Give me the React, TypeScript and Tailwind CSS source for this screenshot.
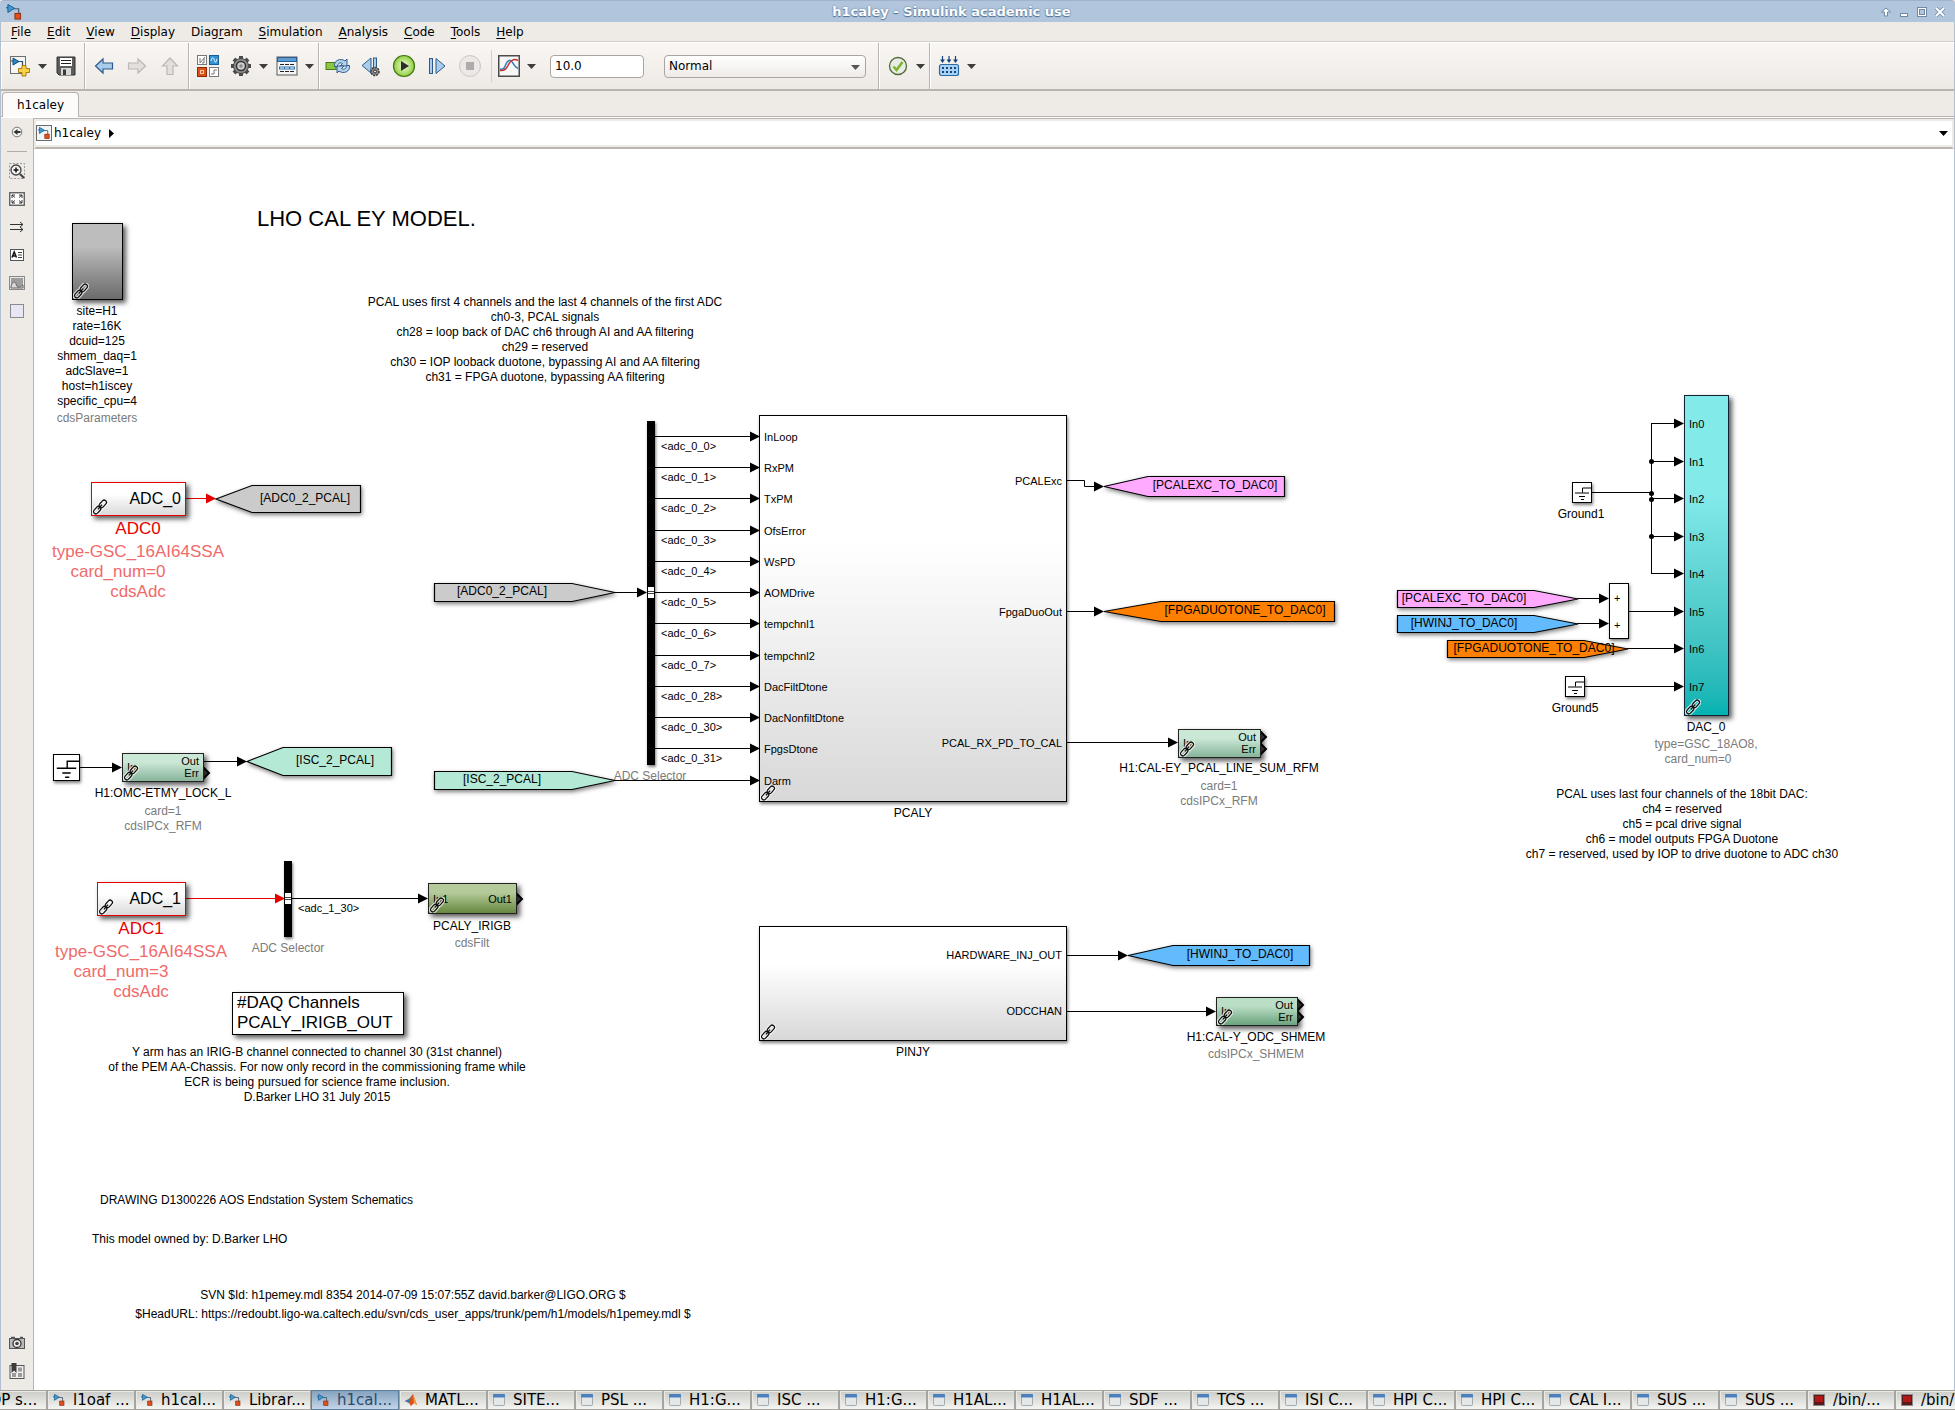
import type { ReactNode } from "react";

/**
 * Model editor window: title bar, menu, toolbar, palette, the block diagram
 * canvas and the desktop task bar underneath.
 */

// Scroll origin of the diagram: block coordinates below are model coordinates.
const ORIGIN_X = 34;
const ORIGIN_Y = 149;

const at = (x: number, y: number) => ({ left: x - ORIGIN_X, top: y - ORIGIN_Y });

/* ------------------------------------------------------------------ */
/* Icons                                                              */
/* ------------------------------------------------------------------ */

const ModelGlyph = () => (
  <>
    <path d="M7 5h6.500v6" fill="none" stroke="#44576b" strokeWidth="1.200" />
    <path d="M0 4h3" stroke="#1c5d92" strokeWidth="1.200" />
    <path d="M2 .5l7 4-7 4.500z" fill="#3f9bd8" stroke="#165a8e" strokeWidth="1" />
    <rect x="9.500" y="10" width="6" height="6" fill="#e0521d" stroke="#8c2a08" strokeWidth="1" />
  </>
);

const ModelIcon = ({ className = "w-4 h-4" }: { className?: string }) => (
  <svg className={className} viewBox="0 0 17 17" aria-hidden="true">
    <ModelGlyph />
  </svg>
);

const BoxedModelIcon = () => (
  <svg className="w-4 h-4" viewBox="0 0 16 16" aria-hidden="true">
    <rect x=".5" y=".5" width="15" height="15" fill="#f2f4f6" stroke="#6b6b6b" />
    <g transform="translate(2 2) scale(.72)">
      <ModelGlyph />
    </g>
  </svg>
);

const NewModelIcon = () => (
  <svg width="22" height="22" viewBox="0 0 22 22">
    <rect x="1.500" y="1.500" width="15" height="17" fill="#f4f5f6" stroke="#6d6d6d" />
    <path d="M2 6h2M9 6.500h4.500v4" fill="none" stroke="#2e4a63" strokeWidth="1.200" />
    <path d="M4 3l6 3.500-6 3.500z" fill="#2f86c4" stroke="#114c7d" />
    <path d="M13 10.500h4v3h3.500v4H17V21h-4v-3.500H9.500v-4H13z" fill="#f8d24b" stroke="#a97a12" />
  </svg>
);

const SaveIcon = () => (
  <svg width="20" height="20" viewBox="0 0 20 20">
    <path d="M1 1h18v18H3l-2-2z" fill="#5d5d5d" stroke="#303030" />
    <rect x="4" y="2" width="12" height="8" fill="#fff" />
    <path d="M5 4.500h10M5 7.500h10" stroke="#222" strokeWidth="1.200" />
    <rect x="5" y="12" width="10" height="7" fill="#d7d7d7" />
    <rect x="7" y="13.500" width="3" height="5.500" fill="#3a3a3a" />
  </svg>
);

const BlockArrow = ({ d, on }: { d: string; on?: boolean }) => (
  <svg width="20" height="18" viewBox="0 0 20 18">
    <path d={d} fill={on ? "#a9cdea" : "#e2dfdc"} stroke={on ? "#2d5a8c" : "#bbb8b4"} strokeWidth="1.200" />
  </svg>
);

const LibraryIcon = () => (
  <svg width="24" height="24" viewBox="0 0 24 24">
    <rect x="1.500" y="1.500" width="9" height="9" fill="#fff" stroke="#777" />
    <path d="M4 4v5l5-6M6 9h2V4" fill="none" stroke="#777" />
    <rect x="13.500" y="1.500" width="9" height="9" fill="#2f93d6" stroke="#135e96" />
    <path d="M15 7c1-5 3-3 3.500-.5S20 9 21 5" fill="none" stroke="#fff" />
    <rect x="1.500" y="13.500" width="9" height="9" fill="#dd5117" stroke="#8c2a08" />
    <rect x="4.500" y="16.500" width="3" height="3" fill="none" stroke="#ffc7a6" />
    <rect x="13.500" y="13.500" width="9" height="9" fill="#fff" stroke="#777" />
    <path d="M15 20h3v-4h3" fill="none" stroke="#777" />
  </svg>
);

const GearIcon = ({ size = 22 }: { size?: number }) => (
  <svg width={size} height={size} viewBox="0 0 22 22">
    <g stroke="#4a4a4a" strokeWidth="4">
      <path d="M11 1v20M1 11h20M4 4l14 14M18 4L4 18" />
    </g>
    <circle cx="11" cy="11" r="7.500" fill="#8d8d8d" stroke="#4a4a4a" />
    <circle cx="11" cy="11" r="4.500" fill="#cfcfcf" stroke="#333" strokeWidth="1.500" />
    <circle cx="11" cy="11" r="1.800" fill="#8a8a8a" />
  </svg>
);

const ExplorerIcon = () => (
  <svg width="22" height="20" viewBox="0 0 22 20">
    <rect x="1" y="1" width="20" height="18" fill="#f4f5f6" stroke="#5a5a5a" />
    <rect x="1.500" y="1.500" width="19" height="4" fill="#5d9bd0" stroke="#2a5f96" />
    <path d="M4 8.500h4M9 8.500h4M14 8.500h4M4 15.500h4M9 15.500h4M14 15.500h4" stroke="#222" strokeWidth="1.200" />
    <path d="M3 12h16" stroke="#2a6fae" strokeWidth="3" />
    <path d="M4 12h4M9 12h4M14 12h4" stroke="#fff" />
  </svg>
);

const FastRestartIcon = () => (
  <svg width="26" height="20" viewBox="0 0 26 20">
    <rect x="1" y="6.500" width="10" height="7" fill="#8dc63f" stroke="#4b7a1d" />
    <path d="M9.500 10.500c-1-6 6-9 10.500-5.500l2-2v7h-7l2.500-2.500c-2-1.500-5-.5-5 3z" fill="#b4d4ee" stroke="#2d5a8c" />
    <path d="M24.500 9.500c1 6-6 9-10.500 5.500l-2 2v-7h7l-2.500 2.500c2 1.500 5 .5 5-3z" fill="#b4d4ee" stroke="#2d5a8c" />
  </svg>
);

const StepBackIcon = () => (
  <svg width="20" height="22" viewBox="0 0 20 22">
    <path d="M10 3v15L1 10.500z" fill="#a9cdea" stroke="#2d5a8c" />
    <rect x="12.500" y="3" width="3" height="12" fill="#a9cdea" stroke="#2d5a8c" />
    <circle cx="14" cy="16.500" r="4" fill="#8d8d8d" stroke="#3a3a3a" strokeWidth="1.500" strokeDasharray="2 1" />
    <circle cx="14" cy="16.500" r="1.500" fill="#ddd" stroke="#333" />
  </svg>
);

const RunIcon = () => (
  <svg width="24" height="24" viewBox="0 0 24 24">
    <circle cx="12" cy="12" r="10.500" fill="url(#runFill)" stroke="#3f7413" strokeWidth="1.200" />
    <path d="M9 7l8 5-8 5z" fill="#2c2c2c" />
  </svg>
);

const StepForwardIcon = () => (
  <svg width="18" height="18" viewBox="0 0 18 18">
    <rect x="1.500" y="1.500" width="3" height="15" fill="#a9cdea" stroke="#2d5a8c" />
    <path d="M8 1.500v15L17 9z" fill="#a9cdea" stroke="#2d5a8c" />
  </svg>
);

const StopIcon = () => (
  <svg width="24" height="24" viewBox="0 0 24 24">
    <circle cx="12" cy="12" r="10.500" fill="#ebe8e5" stroke="#cbc8c4" />
    <rect x="8" y="8" width="8" height="8" fill="#aeabaa" />
  </svg>
);

const ScopeIcon = () => (
  <svg width="22" height="22" viewBox="0 0 22 22">
    <rect x=".75" y=".75" width="20.500" height="20.500" fill="#f7f7f7" stroke="#4b4b4b" strokeWidth="1.500" />
    <path d="M2 14c3.500 1 4.500-1 6-5s4.500-5 6.500-1.500 2.500 4.500 5.500 6" fill="none" stroke="#2f7fc1" strokeWidth="1.500" />
    <path d="M2 15.500c5 .5 6.500-2 8.500-6s5.500-6.500 9.500-4" fill="none" stroke="#c8302c" strokeWidth="1.500" />
  </svg>
);

const CheckIcon = () => (
  <svg width="20" height="20" viewBox="0 0 20 20">
    <circle cx="10" cy="10" r="8.500" fill="#e9ece4" stroke="#4f6a35" strokeWidth="1.300" />
    <path d="M5.500 10.500l3 3.500 6-8" fill="none" stroke="#7ab52c" strokeWidth="2.500" />
  </svg>
);

const BuildIcon = () => (
  <svg width="22" height="22" viewBox="0 0 22 22">
    <path d="M4.500 1v5M11 1v5M17.500 1v5" stroke="#15457a" strokeWidth="1.200" />
    <path d="M2 4.500h5L4.500 8zM8.500 4.500h5L11 8zM15 4.500h5L17.500 8z" fill="#15457a" />
    <rect x="1.500" y="9.500" width="19" height="11" rx="2" fill="#a8d2f3" stroke="#2a6cab" strokeWidth="1.200" />
    <path d="M4 13h14M4 17h14" stroke="#15457a" strokeWidth="2" strokeDasharray="2 2" />
  </svg>
);

const Caret = ({ className = "fill-[#3d3d3d]" }: { className?: string }) => (
  <svg width="9" height="5" viewBox="0 0 9 5" className={className} aria-hidden="true">
    <path d="M0 0h9L4.500 5z" />
  </svg>
);

const LinkBadge = () => (
  <svg className="absolute left-0 bottom-0 w-4 h-4" viewBox="0 0 16 16" aria-hidden="true">
    <g transform="rotate(-48 8 8)" fill="none">
      <g stroke="#fff" strokeOpacity=".75" strokeWidth="3.500">
        <rect x="-.5" y="5.700" width="8.500" height="4.600" rx="2.300" />
        <rect x="8" y="5.700" width="8.500" height="4.600" rx="2.300" />
      </g>
      <g stroke="#111" strokeWidth="1.300">
        <rect x="-.5" y="5.700" width="8.500" height="4.600" rx="2.300" />
        <rect x="8" y="5.700" width="8.500" height="4.600" rx="2.300" />
        <path d="M5 8h6" />
      </g>
    </g>
  </svg>
);

/* ------------------------------------------------------------------ */
/* Window chrome                                                      */
/* ------------------------------------------------------------------ */

const TitleBar = () => (
  <header className="flex items-center h-[22px] shrink-0 pl-1.5 pr-2.5 rounded-t bg-[#b1c6dd] border-t border-[#9fb4ca]">
    <ModelIcon />
    <h1 className="flex-1 text-center text-[13px] leading-5 font-bold text-white [text-shadow:0_0_2px_#4f6f92,0_1px_1px_#4f6f92]">
      h1caley - Simulink academic use
    </h1>
    <div className="flex items-center gap-2">
      <button aria-label="Shade">
        <svg width="10" height="10" viewBox="0 0 10 10">
          <path d="M5 1L.5 5h3v4h3V5h3z" fill="#fff" stroke="#6f88a3" />
        </svg>
      </button>
      <button aria-label="Minimize">
        <svg width="10" height="10" viewBox="0 0 10 10">
          <rect x="1.500" y="6.500" width="7" height="3" fill="#fff" stroke="#6f88a3" />
        </svg>
      </button>
      <button aria-label="Maximize">
        <svg width="10" height="10" viewBox="0 0 10 10">
          <rect x="1.500" y="1.500" width="7" height="7" fill="none" stroke="#6f88a3" strokeWidth="3" />
          <rect x="1.500" y="1.500" width="7" height="7" fill="none" stroke="#fff" />
        </svg>
      </button>
      <button aria-label="Close">
        <svg width="10" height="10" viewBox="0 0 10 10">
          <path d="M1 1l8 8M9 1L1 9" stroke="#6f88a3" strokeWidth="3.500" />
          <path d="M1 1l8 8M9 1L1 9" stroke="#fff" strokeWidth="2" />
        </svg>
      </button>
    </div>
  </header>
);

// [before mnemonic, mnemonic, after]
const MENUS: [string, string, string][] = [
  ["", "F", "ile"],
  ["", "E", "dit"],
  ["", "V", "iew"],
  ["", "D", "isplay"],
  ["Diag", "r", "am"],
  ["", "S", "imulation"],
  ["", "A", "nalysis"],
  ["", "C", "ode"],
  ["", "T", "ools"],
  ["", "H", "elp"],
];

const MenuBar = () => (
  <nav className="flex items-center gap-4 h-5 shrink-0 px-2.5 bg-[#eeebe6] border-b border-[#d2cfcb]">
    {MENUS.map(([pre, key, post]) => (
      <button key={pre + key + post} className="text-[12px] leading-4">
        {pre}
        <span className="underline underline-offset-2">{key}</span>
        {post}
      </button>
    ))}
  </nav>
);

const ToolGroup = ({ children }: { children: ReactNode }) => (
  <div className="flex items-center px-0.5 border-r border-[#b8b4b0] shadow-[inset_1px_0_0_#fff]">{children}</div>
);

const Tool = ({ label, children }: { label: string; children: ReactNode }) => (
  <button aria-label={label} className="flex items-center justify-center w-[33px] h-8">
    {children}
  </button>
);

const More = ({ label }: { label: string }) => (
  <button aria-label={label} className="flex items-center justify-center w-[13px] h-8">
    <Caret />
  </button>
);

const Toolbar = () => (
  <div className="flex h-[49px] shrink-0 border-t border-t-white border-b-2 border-b-[#b8b3af] bg-linear-to-b from-[#f9f6f3] to-[#edeae6]">
    <ToolGroup>
      <Tool label="New model">
        <NewModelIcon />
      </Tool>
      <More label="New options" />
      <Tool label="Save">
        <SaveIcon />
      </Tool>
    </ToolGroup>
    <ToolGroup>
      <Tool label="Back">
        <BlockArrow on d="M9 2v4h9.500v6H9v4L1.500 9z" />
      </Tool>
      <Tool label="Forward">
        <BlockArrow d="M11 2v4H1.500v6H11v4l7.500-7z" />
      </Tool>
      <Tool label="Up to parent">
        <BlockArrow d="M10 1l7.500 8H13v8.500H7V9H2.500z" />
      </Tool>
    </ToolGroup>
    <ToolGroup>
      <Tool label="Library browser">
        <LibraryIcon />
      </Tool>
      <Tool label="Model configuration">
        <GearIcon />
      </Tool>
      <More label="Configuration options" />
      <Tool label="Model explorer">
        <ExplorerIcon />
      </Tool>
      <More label="Explorer options" />
    </ToolGroup>
    <ToolGroup>
      <Tool label="Fast restart">
        <FastRestartIcon />
      </Tool>
      <Tool label="Step back">
        <StepBackIcon />
      </Tool>
      <Tool label="Run">
        <RunIcon />
      </Tool>
      <Tool label="Step forward">
        <StepForwardIcon />
      </Tool>
      <Tool label="Stop">
        <StopIcon />
      </Tool>
      <div className="w-1.5 h-8 border-r border-[#d3d0cc]" />
      <Tool label="Data inspector">
        <ScopeIcon />
      </Tool>
      <More label="Inspector options" />
      <input
        aria-label="Simulation stop time"
        defaultValue="10.0"
        className="w-[94px] h-[23px] ml-3 px-1 text-[12px] rounded-sm border border-[#a9a5a0] bg-white"
      />
      <div className="relative ml-5 mr-2.5">
        <select
          aria-label="Simulation mode"
          className="block appearance-none w-[202px] h-[23px] px-1 text-[12px] leading-5 rounded-sm border border-[#a9a5a0] bg-linear-to-b from-white to-[#eeebe8]"
        >
          <option>Normal</option>
          <option>Accelerator</option>
        </select>
        <div className="absolute right-1.5 top-2.5 pointer-events-none">
          <Caret className="fill-[#555]" />
        </div>
      </div>
    </ToolGroup>
    <ToolGroup>
      <Tool label="Model advisor">
        <CheckIcon />
      </Tool>
      <More label="Advisor options" />
    </ToolGroup>
    <div className="flex items-center px-0.5 shadow-[inset_1px_0_0_#fff]">
      <Tool label="Build">
        <BuildIcon />
      </Tool>
      <More label="Build options" />
    </div>
  </div>
);

const TabStrip = () => (
  <div className="flex items-end h-[26px] shrink-0 px-px border-b border-[#b5b1ad] bg-[#eeebe6]">
    <button className="h-[25px] -mb-px w-[77px] text-[12px] leading-6 rounded-t-sm border border-b-0 border-[#b5b1ad] bg-[#fcfbfa]">
      h1caley
    </button>
  </div>
);

const PaletteButton = ({ label, children }: { label: string; children: ReactNode }) => (
  <button aria-label={label} className="flex items-center justify-center w-8 h-7">
    <svg width="16" height="16" viewBox="0 0 16 16" fill="none">
      {children}
    </svg>
  </button>
);

const Palette = () => (
  <aside className="flex flex-col w-8 shrink-0 pb-[5px] bg-[#eeebe6]">
    <PaletteButton label="Hide browser">
      <circle cx="8" cy="8" r="4.800" fill="#f4f4f4" stroke="#777" />
      <path d="M4.500 8l4-3v2h3v2h-3v2z" fill="#333" />
    </PaletteButton>
    <hr className="w-5 my-[5px] mx-auto border-t-0 h-px bg-[#b0aca8] border-b-0" />
    <PaletteButton label="Zoom">
      <path d="M.5.5h15v15H.5z" stroke="#999" strokeDasharray="2 1.500" />
      <circle cx="7" cy="7" r="5" fill="#f4f4f4" stroke="#444" strokeWidth="1.300" />
      <path d="M11 11l4 4" stroke="#444" strokeWidth="2.200" />
      <path d="M4.500 7h5M7 4.500v5" stroke="#111" strokeWidth="1.500" />
    </PaletteButton>
    <PaletteButton label="Fit to view">
      <rect x=".75" y="1.750" width="14.500" height="12.500" fill="#fff" stroke="#555" strokeWidth="1.300" />
      <path d="M3 7V4h3M10 4h3v3M13 9v3h-3M6 12H3V9M3 4l3 2.500M13 4l-3 2.500M13 12l-3-2.500M3 12l3-2.500" stroke="#333" />
    </PaletteButton>
    <PaletteButton label="Sample time">
      <path d="M1 5.500h13M1 10.500h13M11 3l3 2.500L11 8M11 8l3 2.500-3 2.500" stroke="#333" />
    </PaletteButton>
    <PaletteButton label="Annotation">
      <rect x="1.500" y="2.500" width="13" height="11" fill="#fff" stroke="#555" />
      <path d="M3 10.500L5.200 5l2.300 5.500M4 9h2.700" stroke="#111" strokeWidth="1.500" />
      <path d="M9 5.500h4M9 8h4M9 10.500h4" stroke="#444" />
    </PaletteButton>
    <PaletteButton label="Image">
      <rect x=".5" y="1.500" width="15" height="13" fill="#e8e8e8" stroke="#888" />
      <rect x="2" y="3" width="12" height="10" fill="#9d9d9d" />
      <path d="M2 11c2-5 4-5 5.500-1s3 2 6.500 0v3H2z" fill="#d8d8d8" stroke="#666" />
    </PaletteButton>
    <PaletteButton label="Area">
      <rect x="1.500" y="1.500" width="13" height="13" fill="#e6e6f5" stroke="#8b8b8b" />
    </PaletteButton>
    <div className="flex-1" />
    <PaletteButton label="Screenshot">
      <rect x=".5" y="3.500" width="15" height="10" fill="#b9b9b9" stroke="#555" />
      <path d="M2 2.500h4M11 2.500h3" stroke="#555" strokeWidth="1.500" />
      <circle cx="8" cy="8.500" r="4" fill="#eee" stroke="#333" strokeWidth="1.300" />
      <circle cx="8" cy="8.500" r="1.800" fill="#444" />
    </PaletteButton>
    <PaletteButton label="Bookmarks">
      <rect x="1" y="2.500" width="14" height="13" fill="#eee" stroke="#555" />
      <path d="M9 4.500h4v4H9zM9 10h4v4H9zM3 10h4v4H3z" fill="#9a9a9a" />
      <path d="M2.500 0h5v10L5 7.500 2.500 10z" fill="#3c3c3c" />
    </PaletteButton>
  </aside>
);

const Breadcrumb = () => (
  <div className="flex items-center h-[30px] shrink-0 pb-0.5 border-2 border-[#eeebe6] border-b-[#bbb6b2] bg-white shadow-[inset_0_-2px_0_#eeebe6]">
    <BoxedModelIcon />
    <a href="#h1caley" className="ml-0.5 text-[12px] leading-5">
      h1caley
    </a>
    <svg className="ml-2" width="5" height="9" viewBox="0 0 5 9" aria-hidden="true">
      <path d="M0 0l5 4.500L0 9z" />
    </svg>
    <button aria-label="Show history" className="ml-auto mr-1">
      <Caret className="fill-black" />
    </button>
  </div>
);

/* ------------------------------------------------------------------ */
/* Diagram                                                            */
/* ------------------------------------------------------------------ */

type Wire = { d: string; tip?: [number, number]; red?: boolean };

const BUS_ROWS: { y: number; signal?: string; port: string }[] = [
  { y: 436, signal: "<adc_0_0>", port: "InLoop" },
  { y: 467, signal: "<adc_0_1>", port: "RxPM" },
  { y: 498, signal: "<adc_0_2>", port: "TxPM" },
  { y: 530, signal: "<adc_0_3>", port: "OfsError" },
  { y: 561, signal: "<adc_0_4>", port: "WsPD" },
  { y: 592, signal: "<adc_0_5>", port: "AOMDrive" },
  { y: 623, signal: "<adc_0_6>", port: "tempchnl1" },
  { y: 655, signal: "<adc_0_7>", port: "tempchnl2" },
  { y: 686, signal: "<adc_0_28>", port: "DacFiltDtone" },
  { y: 717, signal: "<adc_0_30>", port: "DacNonfiltDtone" },
  { y: 748, signal: "<adc_0_31>", port: "FpgsDtone" },
  { y: 780, port: "Darm" },
];

const DAC_PORTS = [423, 461, 498, 536, 573, 611, 648, 686];

const WIRES: Wire[] = [
  { d: "M186 498.500H206", tip: [216, 498], red: true },
  { d: "M79 767.500H112", tip: [122, 767] },
  { d: "M204 761.500H238", tip: [247, 761] },
  { d: "M186 898.500H275", tip: [285, 898], red: true },
  { d: "M292 898.500H418", tip: [428, 898] },
  { d: "M614 592.500H638", tip: [647, 592] },
  ...BUS_ROWS.map(({ y, signal }): Wire => ({ d: `M${signal ? 654 : 614} ${y}.5H750`, tip: [760, y] })),
  { d: "M1067 480.500H1084.500V486.500H1094", tip: [1104, 486] },
  { d: "M1067 611.500H1094", tip: [1104, 611] },
  { d: "M1067 742.500H1168", tip: [1178, 742] },
  { d: "M1067 955.500H1118", tip: [1128, 955] },
  { d: "M1067 1011.500H1206", tip: [1216, 1011] },
  { d: "M1592 492.500H1651.500" },
  { d: "M1651.500 423V574" },
  ...DAC_PORTS.slice(0, 5).map((y): Wire => ({ d: `M1651 ${y}.5H1675`, tip: [1684, y] })),
  { d: "M1577 598.500H1600", tip: [1609, 598] },
  { d: "M1577 623.500H1600", tip: [1609, 623] },
  { d: "M1629 611.500H1675", tip: [1684, 611] },
  { d: "M1627 648.500H1675", tip: [1684, 648] },
  { d: "M1585 686.500H1675", tip: [1684, 686] },
];

const JUNCTIONS = [461, 493, 499, 536];

const Wires = () => (
  <svg className="absolute inset-0 w-full h-full" aria-hidden="true">
    <g transform={`translate(${-ORIGIN_X} ${-ORIGIN_Y})`}>
      {WIRES.map(({ d, tip, red }) => (
        <g key={d} className={red ? "stroke-[#e80000] fill-[#e80000]" : "stroke-black fill-black"}>
          <path d={d} fill="none" />
          {tip && <path d={`M${tip[0]} ${tip[1] + 0.5}l-10-5v10z`} stroke="none" />}
        </g>
      ))}
      {JUNCTIONS.map((y) => (
        <circle key={y} cx="1651.500" cy={y + 0.5} r="2.500" />
      ))}
    </g>
  </svg>
);

type BlockProps = {
  x: number;
  y: number;
  w: number;
  h: number;
  className: string;
  linked?: boolean;
  children?: ReactNode;
};

const Block = ({ x, y, w, h, className, linked, children }: BlockProps) => (
  <div className={`absolute border ${className}`} style={{ ...at(x, y), width: w, height: h }}>
    {children}
    {linked && <LinkBadge />}
  </div>
);

const DEEP = "shadow-[3px_3px_5px_rgba(0,0,0,0.65)]";
const SOFT = "shadow-[1px_2px_3px_rgba(0,0,0,0.5)]";

type PortProps = { x: number; y: number; children: ReactNode; side?: "left" | "right" };

/* Port caption, vertically centred on y and anchored to one side. */
const Port = ({ x, y, children, side = "left" }: PortProps) => (
  <div
    className={`absolute flex w-0 text-[11px] leading-[14px] whitespace-nowrap ${side === "right" ? "justify-end" : ""}`}
    style={at(x, y - 7)}
  >
    <span>{children}</span>
  </div>
);

/* Open output port. */
const Chevron = ({ x, y }: { x: number; y: number }) => (
  <svg className="absolute" width="9" height="14" viewBox="0 0 9 14" style={at(x, y - 7)} aria-hidden="true">
    <path d="M0 1l6 6-6 6" fill="#555" stroke="#000" strokeWidth="2" />
  </svg>
);

const IpcBlock = ({ x, y, w, className, oneOpen }: { x: number; y: number; w: number; className: string; oneOpen?: boolean }) => (
  <>
    {!oneOpen && <Chevron x={x + w - 1} y={y + 8} />}
    <Chevron x={x + w - 1} y={y + 20} />
    <Block x={x} y={y} w={w} h={29} linked className={`border-[#222] ${DEEP} ${className}`}>
      <span className="absolute left-1 top-1.5 text-[11px] leading-[14px]">In</span>
      <div className="flex flex-col items-end px-1 pt-px text-[11px] leading-3">
        <span>Out</span>
        <span>Err</span>
      </div>
    </Block>
  </>
);

type TagProps = {
  x: number;
  y: number;
  w: number;
  h: number;
  point: number;
  goto?: boolean;
  fill: string;
  textX: number;
  label: string;
};

/* Goto tags point left, From tags point right. */
const Tag = ({ x, y, w, h, point, goto: isGoto, fill, textX, label }: TagProps) => {
  const mid = h / 2;
  const points = isGoto
    ? `0,${mid} ${point},.5 ${w - 0.5},.5 ${w - 0.5},${h - 0.5} ${point},${h - 0.5}`
    : `.5,.5 ${w - point},.5 ${w},${mid} ${w - point},${h - 0.5} .5,${h - 0.5}`;
  return (
    <div className="absolute" style={{ ...at(x, y), width: w, height: h }}>
      <svg
        className="absolute inset-0 overflow-visible drop-shadow-[1px_2px_2px_rgba(0,0,0,0.5)]"
        width={w}
        height={h}
        aria-hidden="true"
      >
        <polygon points={points} className={`stroke-black ${fill}`} strokeWidth="1.200" />
      </svg>
      <div className="absolute inset-y-0 flex items-center justify-center w-0 pb-0.5" style={{ left: textX - x }}>
        <span className="text-[12px] leading-[15px] whitespace-nowrap">{label}</span>
      </div>
    </div>
  );
};

const TAGS: TagProps[] = [
  { x: 216, y: 485, w: 145, h: 28, point: 36, goto: true, fill: "fill-[#cbcbcb]", textX: 305, label: "[ADC0_2_PCAL]" },
  { x: 247, y: 747, w: 145, h: 29, point: 36, goto: true, fill: "fill-[#b4e9d5]", textX: 335, label: "[ISC_2_PCAL]" },
  { x: 434, y: 583, w: 181, h: 19, point: 43, fill: "fill-[#cbcbcb]", textX: 502, label: "[ADC0_2_PCAL]" },
  { x: 434, y: 771, w: 181, h: 19, point: 43, fill: "fill-[#b4e9d5]", textX: 502, label: "[ISC_2_PCAL]" },
  { x: 1104, y: 476, w: 181, h: 21, point: 44, goto: true, fill: "fill-[#ffaaff]", textX: 1215, label: "[PCALEXC_TO_DAC0]" },
  { x: 1104, y: 601, w: 231, h: 21, point: 57, goto: true, fill: "fill-[#ff8000]", textX: 1245, label: "[FPGADUOTONE_TO_DAC0]" },
  { x: 1128, y: 945, w: 182, h: 21, point: 45, goto: true, fill: "fill-[#62bbfc]", textX: 1240, label: "[HWINJ_TO_DAC0]" },
  { x: 1397, y: 590, w: 181, h: 18, point: 44, fill: "fill-[#ffaaff]", textX: 1464, label: "[PCALEXC_TO_DAC0]" },
  { x: 1397, y: 615, w: 181, h: 18, point: 44, fill: "fill-[#62bbfc]", textX: 1464, label: "[HWINJ_TO_DAC0]" },
  { x: 1447, y: 640, w: 181, h: 18, point: 44, fill: "fill-[#ff8000]", textX: 1534, label: "[FPGADUOTONE_TO_DAC0]" },
];

const Ground = ({ x, y, w = 20, h = 21 }: { x: number; y: number; w?: number; h?: number }) => (
  <Block x={x} y={y} w={w} h={h} className={`border-black bg-white ${SOFT}`}>
    <svg className="w-full h-full" viewBox="0 0 18 18" aria-hidden="true">
      <path d="M18 4.500H9.500V9M2 9.500h14M6 13h6M8 16h3" fill="none" stroke="#000" />
    </svg>
  </Block>
);

/* Bus selector bar with the small input notch. */
const Selector = ({ x, y, h, notch }: { x: number; y: number; h: number; notch: number }) => (
  <div className="absolute w-2 bg-black shadow-[1px_2px_3px_rgba(0,0,0,0.5)]" style={{ ...at(x, y), height: h }}>
    <div className="absolute inset-x-px h-[11px] pt-1 bg-white" style={{ top: notch - y }}>
      <div className="h-[3px] border-y border-[#444]" />
    </div>
  </div>
);

type NoteProps = { x: number; y: number; lines: string[]; tone?: string; align?: "left" };

/* Free text; y is the middle of the first line. */
const Note = ({ x, y, lines, tone = "", align }: NoteProps) => (
  <div className="absolute flex justify-center w-0" style={at(x, y - 7)}>
    <div
      className={`text-[12px] leading-[15px] whitespace-nowrap ${align === "left" ? "w-0" : "text-center"} ${tone}`}
    >
      {lines.map((line) => (
        <p key={line}>{line}</p>
      ))}
    </div>
  </div>
);

const GRAY = "text-[#7b7b7b]";

const NOTES: NoteProps[] = [
  {
    x: 97,
    y: 311,
    lines: ["site=H1", "rate=16K", "dcuid=125", "shmem_daq=1", "adcSlave=1", "host=h1iscey", "specific_cpu=4"],
  },
  { x: 97, y: 418, lines: ["cdsParameters"], tone: GRAY },
  {
    x: 545,
    y: 302,
    lines: [
      "PCAL uses first 4 channels and the last 4 channels of the first ADC",
      "ch0-3, PCAL signals",
      "ch28 = loop back of DAC ch6 through AI and AA filtering",
      "ch29 = reserved",
      "ch30 = IOP looback duotone, bypassing AI and AA filtering",
      "ch31 = FPGA duotone, bypassing AA filtering",
    ],
  },
  { x: 163, y: 793, lines: ["H1:OMC-ETMY_LOCK_L"] },
  { x: 163, y: 811, lines: ["card=1", "cdsIPCx_RFM"], tone: GRAY },
  { x: 288, y: 948, lines: ["ADC Selector"], tone: GRAY },
  { x: 472, y: 926, lines: ["PCALY_IRIGB"] },
  { x: 472, y: 943, lines: ["cdsFilt"], tone: GRAY },
  {
    x: 317,
    y: 1052,
    lines: [
      "Y arm has an IRIG-B channel connected to channel 30 (31st channel)",
      "of the PEM AA-Chassis. For now only record in the commissioning frame while",
      "ECR is being pursued for science frame inclusion.",
      "D.Barker LHO 31 July 2015",
    ],
  },
  { x: 100, y: 1200, lines: ["DRAWING D1300226 AOS Endstation System Schematics"], align: "left" },
  { x: 92, y: 1239, lines: ["This model owned by: D.Barker LHO"], align: "left" },
  { x: 413, y: 1295, lines: ["SVN $Id: h1pemey.mdl 8354 2014-07-09 15:07:55Z david.barker@LIGO.ORG $"] },
  { x: 413, y: 1314, lines: ["$HeadURL: https://redoubt.ligo-wa.caltech.edu/svn/cds_user_apps/trunk/pem/h1/models/h1pemey.mdl $"] },
  { x: 650, y: 776, lines: ["ADC Selector"], tone: GRAY },
  { x: 913, y: 813, lines: ["PCALY"] },
  { x: 913, y: 1052, lines: ["PINJY"] },
  { x: 1219, y: 768, lines: ["H1:CAL-EY_PCAL_LINE_SUM_RFM"] },
  { x: 1219, y: 786, lines: ["card=1", "cdsIPCx_RFM"], tone: GRAY },
  { x: 1256, y: 1037, lines: ["H1:CAL-Y_ODC_SHMEM"] },
  { x: 1256, y: 1054, lines: ["cdsIPCx_SHMEM"], tone: GRAY },
  { x: 1581, y: 514, lines: ["Ground1"] },
  { x: 1575, y: 708, lines: ["Ground5"] },
  { x: 1706, y: 727, lines: ["DAC_0"] },
  { x: 1706, y: 744, lines: ["type=GSC_18AO8,"], tone: GRAY },
  { x: 1698, y: 759, lines: ["card_num=0"], tone: GRAY },
  {
    x: 1682,
    y: 794,
    lines: [
      "PCAL uses last four channels of the 18bit DAC:",
      "ch4 = reserved",
      "ch5 = pcal drive signal",
      "ch6 = model outputs FPGA Duotone",
      "ch7 = reserved, used by IOP to drive duotone to ADC ch30",
    ],
  },
];

const AdcBlock = ({ x, y, w, n, card, mid }: { x: number; y: number; w: number; n: number; card: number; mid: number }) => (
  <>
    <Block
      x={x}
      y={y}
      w={w}
      h={34}
      linked
      className={`flex items-center justify-end pr-1 border-[#e80000] bg-linear-to-b from-white from-35% to-[#d9d9d9] ${DEEP}`}
    >
      <span className="text-[16px] leading-5">ADC_{n}</span>
    </Block>
    <div className="absolute flex justify-center w-0 whitespace-nowrap" style={at(mid, y + 37)}>
      <div className="text-[17px] leading-5 text-center text-[#f06a6a]">
        <p className="mb-[3px] text-[#e80000]">ADC{n}</p>
        <p>type-GSC_16AI64SSA</p>
        <p className="pr-10">card_num={card}</p>
        <p>cdsAdc</p>
      </div>
    </div>
  </>
);

const Diagram = () => (
  <main className="relative flex-1 overflow-hidden bg-white [font-family:'Liberation_Sans',Arial,sans-serif] text-black">
    <Wires />

    <h2 className="absolute text-[22px] leading-7 whitespace-nowrap" style={at(257, 205)}>
      LHO CAL EY MODEL.
    </h2>

    <Block x={72} y={223} w={51} h={77} linked className={`border-black bg-linear-to-b from-[#bdbdbd] from-30% to-[#6c6c6c] ${DEEP}`} />

    <AdcBlock x={91} y={482} w={95} n={0} card={0} mid={138} />
    <AdcBlock x={97} y={882} w={89} n={1} card={3} mid={141} />

    <Ground x={53} y={754} w={27} h={27} />
    <IpcBlock x={122} y={753} w={82} oneOpen className="bg-linear-to-b from-[#cbe8d6] from-30% to-[#88b59b]" />

    <Selector x={284} y={861} h={76} notch={893} />
    <Port x={298} y={908}>
      {"<adc_1_30>"}
    </Port>
    <Chevron x={516} y={899} />
    <Block
      x={428}
      y={883}
      w={89}
      h={31}
      linked
      className={`flex items-center justify-between px-1 text-[11px] leading-[14px] border-[#222] bg-linear-to-b from-[#b4cb99] from-30% to-[#67883f] ${DEEP}`}
    >
      <span>In1</span>
      <span>Out1</span>
    </Block>

    <Block x={232} y={992} w={172} h={43} className={`px-1 text-[17px] leading-5 border-black bg-white ${DEEP}`}>
      <p>#DAQ Channels</p>
      <p>PCALY_IRIGB_OUT</p>
    </Block>

    <Selector x={647} y={421} h={344} notch={587} />
    <Block x={759} y={415} w={308} h={387} linked className={`border-black bg-linear-to-b from-white from-33% to-[#d8d8d8] ${SOFT}`} />
    {BUS_ROWS.map(({ y, signal, port }) => (
      <div key={port}>
        {signal && (
          <Port x={661} y={y + 10}>
            {signal}
          </Port>
        )}
        <Port x={764} y={y + 1}>
          {port}
        </Port>
      </div>
    ))}
    <Port x={1062} y={481} side="right">
      PCALExc
    </Port>
    <Port x={1062} y={612} side="right">
      FpgaDuoOut
    </Port>
    <Port x={1062} y={743} side="right">
      PCAL_RX_PD_TO_CAL
    </Port>
    <IpcBlock x={1178} y={729} w={83} className="bg-linear-to-b from-[#cbe8d6] from-30% to-[#88b59b]" />

    <Block x={759} y={926} w={308} h={115} linked className={`border-black bg-linear-to-b from-white from-33% to-[#d8d8d8] ${SOFT}`} />
    <Port x={1062} y={955} side="right">
      HARDWARE_INJ_OUT
    </Port>
    <Port x={1062} y={1011} side="right">
      ODCCHAN
    </Port>
    <IpcBlock x={1216} y={997} w={82} className="bg-linear-to-b from-[#bbdec6] from-30% to-[#6ba37e]" />

    <Ground x={1572} y={482} />
    <Ground x={1565} y={676} />
    <Block
      x={1609}
      y={583}
      w={20}
      h={56}
      className={`flex flex-col justify-around px-1 text-[11px] leading-4 border-black bg-white ${SOFT}`}
    >
      <span>+</span>
      <span>+</span>
    </Block>
    <Block x={1684} y={395} w={45} h={321} linked className={`border-[#123] bg-linear-to-b from-[#83eaea] from-30% to-[#00b2b2] ${DEEP}`} />
    {DAC_PORTS.map((y, i) => (
      <Port key={y} x={1689} y={y + 1}>
        In{i}
      </Port>
    ))}

    {TAGS.map((tag) => (
      <Tag key={`${tag.x}-${tag.y}`} {...tag} />
    ))}
    {NOTES.map((note) => (
      <Note key={`${note.x}-${note.y}`} {...note} />
    ))}
  </main>
);

/* ------------------------------------------------------------------ */
/* Task bar                                                           */
/* ------------------------------------------------------------------ */

type TaskKind = "model" | "matlab" | "window" | "term";

const TASKS: { label: string; kind: TaskKind; active?: boolean }[] = [
  { label: "IOP s...", kind: "model" },
  { label: "l1oaf ...", kind: "model" },
  { label: "h1cal...", kind: "model" },
  { label: "Librar...", kind: "model" },
  { label: "h1cal...", kind: "model", active: true },
  { label: "MATL...", kind: "matlab" },
  { label: "SITE...", kind: "window" },
  { label: "PSL ...", kind: "window" },
  { label: "H1:G...", kind: "window" },
  { label: "ISC ...", kind: "window" },
  { label: "H1:G...", kind: "window" },
  { label: "H1AL...", kind: "window" },
  { label: "H1AL...", kind: "window" },
  { label: "SDF ...", kind: "window" },
  { label: "TCS ...", kind: "window" },
  { label: "ISI C...", kind: "window" },
  { label: "HPI C...", kind: "window" },
  { label: "HPI C...", kind: "window" },
  { label: "CAL I...", kind: "window" },
  { label: "SUS ...", kind: "window" },
  { label: "SUS ...", kind: "window" },
  { label: "/bin/...", kind: "term" },
  { label: "/bin/...", kind: "term" },
];

const TaskIcon = ({ kind }: { kind: TaskKind }) => {
  if (kind === "model") return <ModelIcon className="w-3 h-3 shrink-0" />;
  return (
    <svg className="w-3 h-3 shrink-0" viewBox="0 0 12 12" aria-hidden="true">
      {kind === "matlab" && (
        <>
          <path d="M0 7l4-2 4-5 4 11-3-2-3 3-2-3z" fill="#d9531e" />
          <path d="M0 7l4-2 2-2-2 6z" fill="#3a78b5" />
          <path d="M8 0l4 11-3-2z" fill="#f2a13c" />
        </>
      )}
      {kind === "window" && (
        <>
          <rect x=".5" y=".5" width="11" height="11" rx="1" fill="#e4e7e7" stroke="#a3abb3" />
          <rect x="0" y="0" width="12" height="3.500" rx="1" fill="#4a7fc0" />
        </>
      )}
      {kind === "term" && (
        <>
          <rect x=".5" y=".5" width="11" height="11" fill="#5a1a1a" stroke="#8a8a8a" />
          <rect x="2" y="2" width="8" height="6" fill="#b01818" />
        </>
      )}
    </svg>
  );
};

const TaskBar = () => (
  <footer className="flex h-5 shrink-0 overflow-hidden bg-[#a5a49e]">
    <div className="flex -ml-[41px]">
      {TASKS.map(({ label, kind, active }, i) => (
        <button
          key={i}
          className={`flex items-center gap-2 w-[88px] h-5 pl-[5px] shrink-0 text-[15px] leading-4 whitespace-nowrap overflow-hidden border ${
            active
              ? "text-[#2c4a6b] border-[#5f7f9f] bg-linear-to-b from-[#86a2be] to-[#c3d5e8]"
              : "text-black border-[#a5a49e] bg-linear-to-b from-[#cbcbc7] to-[#f4f4f2] shadow-[inset_1px_1px_0_#e9e9e6]"
          }`}
        >
          <TaskIcon kind={kind} />
          {label}
        </button>
      ))}
    </div>
  </footer>
);

export default function App() {
  return (
    <div className="flex flex-col h-screen overflow-hidden bg-[#eeebe6] [font-family:'DejaVu_Sans',sans-serif] text-black">
      {/* gradient used by the run button */}
      <svg className="absolute w-0 h-0" aria-hidden="true">
        <defs>
          <radialGradient id="runFill">
            <stop offset="0" stopColor="#f2fbe0" />
            <stop offset="1" stopColor="#8fd03a" />
          </radialGradient>
        </defs>
      </svg>
      <TitleBar />
      <div className="flex flex-col flex-1 min-h-0 border-x border-[#b1c1d2]">
        <MenuBar />
        <Toolbar />
        <TabStrip />
        <div className="flex flex-1 min-h-0 border-t border-white">
          <Palette />
          <div className="flex flex-col flex-1 min-w-0 border-l border-t border-[#b8b3b1]">
            <Breadcrumb />
            <Diagram />
          </div>
        </div>
      </div>
      <TaskBar />
    </div>
  );
}
